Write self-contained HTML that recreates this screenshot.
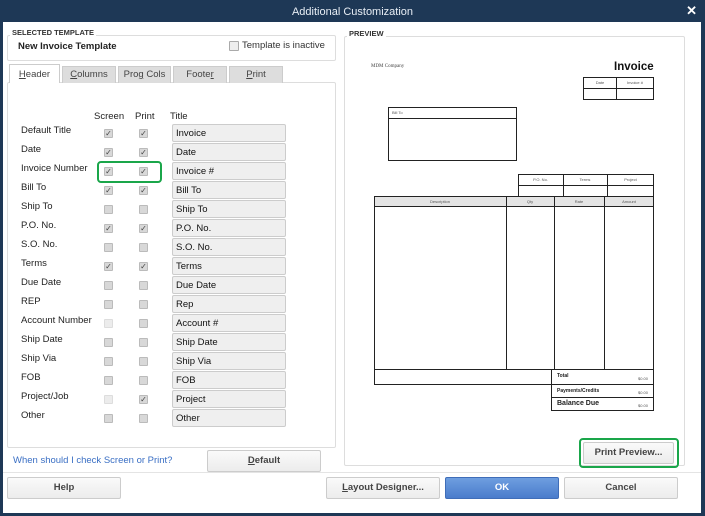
<!DOCTYPE html>
<html><head><style>
*{box-sizing:border-box;margin:0;padding:0}
body{width:705px;height:516px;background:#1e3856;font-family:"Liberation Sans",sans-serif;font-size:9.5px;color:#222;position:relative;overflow:hidden}
.a{position:absolute}
#win{left:3px;top:22px;width:698px;height:491px;background:#fff}
.title{left:0;top:0;width:705px;height:22px;color:#e8eef5;font-size:11px;text-align:center;line-height:24px}
.x{right:8px;top:3px;color:#fff;font-size:13px;font-weight:bold}
.grp{border:1px solid #ddd;border-radius:2px}
.lab{font-size:7.5px;font-weight:bold;color:#333;background:#fff;padding:0 2px}
.tab{top:66px;height:17px;background:#ddd;border:1px solid #ccc;border-bottom:none;text-align:center;line-height:16px;color:#444;font-size:9.5px}
.row{left:21px;font-size:9.5px}
.cb{width:9px;height:9px;border:1px solid #bbb;background:#d8d8d8;border-radius:1px;font-size:8px;line-height:7px;text-align:center;color:#444}
.cb.l{background:#ececec;border-color:#ddd}
.fld{left:172px;width:114px;height:18px;background:#efefef;border:1px solid #ccc;border-radius:2px;padding-left:3px;line-height:17px;font-size:9.5px;color:#111}
.btn{height:22px;border:1px solid #ccc;border-radius:2px;background:linear-gradient(#fafafa,#ececec);text-align:center;line-height:20px;font-weight:bold;color:#444;font-size:9.5px}
.bl{border:1px solid #222}
.t{font-size:4px;color:#555;text-align:center}
u{text-decoration:underline}
</style></head><body>
<div class="a title">Additional Customization</div>
<div class="a x">✕</div>
<div class="a" id="win"></div>
<div class="a grp" style="left:7px;top:35px;width:329px;height:26px"></div>
<div class="a lab" style="left:10px;top:28px">SELECTED TEMPLATE</div>
<div class="a" style="left:18px;top:41px;font-weight:bold;font-size:9.5px">New Invoice Template</div>
<div class="a cb l" style="left:229px;top:41px;width:10px;height:10px;background:#eee;border-color:#aaa"></div>
<div class="a" style="left:242px;top:40px;color:#333">Template is inactive</div>

<div class="a grp" style="left:7px;top:82px;width:329px;height:366px;border-color:#ddd"></div>
<div class="a tab" style="left:9px;width:51px;background:#fff;top:64px;height:19px;border-color:#ccc;line-height:19px"><u>H</u>eader</div>
<div class="a tab" style="left:62px;width:54px"><u>C</u>olumns</div>
<div class="a tab" style="left:118px;width:53px">Pro<u>g</u> Cols</div>
<div class="a tab" style="left:173px;width:54px">Foote<u>r</u></div>
<div class="a tab" style="left:229px;width:54px"><u>P</u>rint</div>

<div class="a" style="left:94px;top:111px">Screen</div>
<div class="a" style="left:135px;top:111px">Print</div>
<div class="a" style="left:170px;top:111px">Title</div>

<div class="a row" style="top:125px">Default Title</div><div class="a cb" style="left:104px;top:129px">✓</div><div class="a cb" style="left:139px;top:129px">✓</div><div class="a fld" style="top:124px">Invoice</div>
<div class="a row" style="top:144px">Date</div><div class="a cb" style="left:104px;top:148px">✓</div><div class="a cb" style="left:139px;top:148px">✓</div><div class="a fld" style="top:143px">Date</div>
<div class="a row" style="top:163px">Invoice Number</div><div class="a cb" style="left:104px;top:167px">✓</div><div class="a cb" style="left:139px;top:167px">✓</div><div class="a fld" style="top:162px">Invoice #</div>
<div class="a row" style="top:182px">Bill To</div><div class="a cb" style="left:104px;top:186px">✓</div><div class="a cb" style="left:139px;top:186px">✓</div><div class="a fld" style="top:181px">Bill To</div>
<div class="a row" style="top:201px">Ship To</div><div class="a cb" style="left:104px;top:205px"></div><div class="a cb" style="left:139px;top:205px"></div><div class="a fld" style="top:200px">Ship To</div>
<div class="a row" style="top:220px">P.O. No.</div><div class="a cb" style="left:104px;top:224px">✓</div><div class="a cb" style="left:139px;top:224px">✓</div><div class="a fld" style="top:219px">P.O. No.</div>
<div class="a row" style="top:239px">S.O. No.</div><div class="a cb" style="left:104px;top:243px"></div><div class="a cb" style="left:139px;top:243px"></div><div class="a fld" style="top:238px">S.O. No.</div>
<div class="a row" style="top:258px">Terms</div><div class="a cb" style="left:104px;top:262px">✓</div><div class="a cb" style="left:139px;top:262px">✓</div><div class="a fld" style="top:257px">Terms</div>
<div class="a row" style="top:277px">Due Date</div><div class="a cb" style="left:104px;top:281px"></div><div class="a cb" style="left:139px;top:281px"></div><div class="a fld" style="top:276px">Due Date</div>
<div class="a row" style="top:296px">REP</div><div class="a cb" style="left:104px;top:300px"></div><div class="a cb" style="left:139px;top:300px"></div><div class="a fld" style="top:295px">Rep</div>
<div class="a row" style="top:315px">Account Number</div><div class="a cb l" style="left:104px;top:319px"></div><div class="a cb" style="left:139px;top:319px"></div><div class="a fld" style="top:314px">Account #</div>
<div class="a row" style="top:334px">Ship Date</div><div class="a cb" style="left:104px;top:338px"></div><div class="a cb" style="left:139px;top:338px"></div><div class="a fld" style="top:333px">Ship Date</div>
<div class="a row" style="top:353px">Ship Via</div><div class="a cb" style="left:104px;top:357px"></div><div class="a cb" style="left:139px;top:357px"></div><div class="a fld" style="top:352px">Ship Via</div>
<div class="a row" style="top:372px">FOB</div><div class="a cb" style="left:104px;top:376px"></div><div class="a cb" style="left:139px;top:376px"></div><div class="a fld" style="top:371px">FOB</div>
<div class="a row" style="top:391px">Project/Job</div><div class="a cb l" style="left:104px;top:395px"></div><div class="a cb" style="left:139px;top:395px">✓</div><div class="a fld" style="top:390px">Project</div>
<div class="a row" style="top:410px">Other</div><div class="a cb" style="left:104px;top:414px"></div><div class="a cb" style="left:139px;top:414px"></div><div class="a fld" style="top:409px">Other</div>
<div class="a" style="left:97px;top:161px;width:65px;height:22px;border:2px solid #1aa64a;border-radius:4px"></div>

<div class="a" style="left:13px;top:455px;color:#3a6fc4">When should I check Screen or Print?</div>
<div class="a btn" style="left:207px;top:450px;width:114px"><u>D</u>efault</div>

<div class="a grp" style="left:344px;top:36px;width:341px;height:430px"></div>
<div class="a lab" style="left:347px;top:29px">PREVIEW</div>
<div class="a" style="left:371px;top:64px;font-family:'Liberation Serif',serif;font-size:5px;color:#444">MDM Company</div>
<div class="a" style="left:614px;top:61px;font-weight:bold;font-size:11.5px;color:#111">Invoice</div>
<div class="a bl" style="left:583px;top:77px;width:71px;height:23px"></div>
<div class="a" style="left:583px;top:88px;width:71px;border-top:1px solid #222"></div>
<div class="a" style="left:616px;top:77px;height:23px;border-left:1px solid #222"></div>
<div class="a t" style="left:588px;top:80px;width:24px">Date</div><div class="a t" style="left:618px;top:80px;width:34px">Invoice #</div>
<div class="a bl" style="left:388px;top:107px;width:129px;height:54px"></div>
<div class="a" style="left:388px;top:118px;width:129px;border-top:1px solid #222"></div>
<div class="a t" style="left:392px;top:110px">Bill To</div>
<div class="a bl" style="left:518px;top:174px;width:136px;height:23px"></div>
<div class="a" style="left:518px;top:185px;width:136px;border-top:1px solid #222"></div>
<div class="a" style="left:563px;top:174px;height:23px;border-left:1px solid #222"></div>
<div class="a" style="left:607px;top:174px;height:23px;border-left:1px solid #222"></div>
<div class="a t" style="left:518px;top:177px;width:45px">P.O. No.</div><div class="a t" style="left:563px;top:177px;width:44px">Terms</div><div class="a t" style="left:607px;top:177px;width:47px">Project</div>
<div class="a bl" style="left:374px;top:196px;width:280px;height:189px"></div>
<div class="a" style="left:375px;top:197px;width:278px;height:10px;background:#e4e4e4;border-bottom:1px solid #222"></div>
<div class="a" style="left:506px;top:196px;height:174px;border-left:1px solid #222"></div>
<div class="a" style="left:554px;top:196px;height:174px;border-left:1px solid #222"></div>
<div class="a" style="left:604px;top:196px;height:174px;border-left:1px solid #222"></div>
<div class="a" style="left:374px;top:369px;width:280px;border-top:1px solid #222"></div>
<div class="a t" style="left:374px;top:199px;width:132px">Description</div><div class="a t" style="left:506px;top:199px;width:48px">Qty</div><div class="a t" style="left:554px;top:199px;width:50px">Rate</div><div class="a t" style="left:604px;top:199px;width:50px">Amount</div>
<div class="a bl" style="left:551px;top:369px;width:103px;height:42px"></div>
<div class="a" style="left:551px;top:384px;width:103px;border-top:1px solid #222"></div>
<div class="a" style="left:551px;top:397px;width:103px;border-top:1px solid #222"></div>
<div class="a" style="left:557px;top:373px;font-size:5px;font-weight:bold">Total</div>
<div class="a" style="left:557px;top:388px;font-size:5px;font-weight:bold">Payments/Credits</div>
<div class="a" style="left:557px;top:400px;font-size:7px;font-weight:bold">Balance Due</div>
<div class="a t" style="left:638px;top:376px">$0.00</div><div class="a t" style="left:638px;top:390px">$0.00</div><div class="a t" style="left:638px;top:403px">$0.00</div>
<div class="a btn" style="left:583px;top:442px;width:91px">Print Preview...</div>
<div class="a" style="left:579px;top:438px;width:100px;height:30px;border:2px solid #1aa64a;border-radius:4px"></div>

<div class="a" style="left:3px;top:472px;width:698px;border-top:1px solid #e4e4e4"></div>
<div class="a btn" style="left:7px;top:477px;width:114px">Help</div>
<div class="a btn" style="left:326px;top:477px;width:114px"><u>L</u>ayout Designer...</div>
<div class="a btn" style="left:445px;top:477px;width:114px;background:linear-gradient(#6e9ee0,#4a7ccc);border-color:#3f6db8;color:#fff">OK</div>
<div class="a btn" style="left:564px;top:477px;width:114px">Cancel</div>
</body></html>
